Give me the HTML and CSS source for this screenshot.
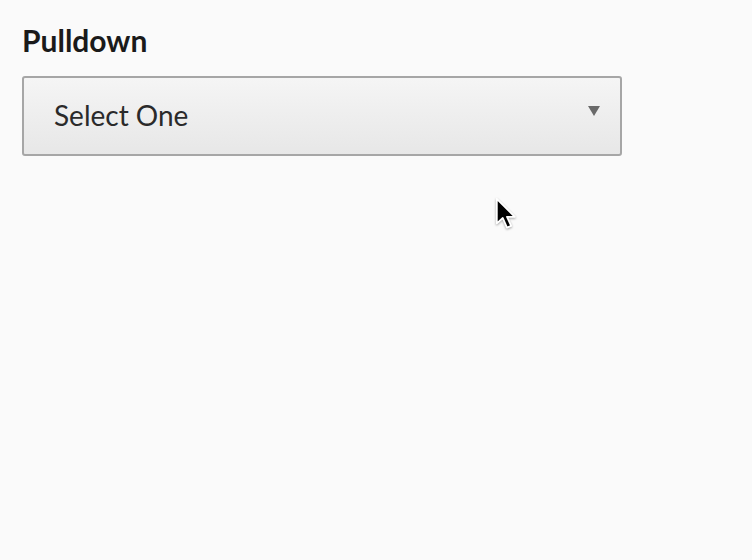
FILE: index.html
```html
<!DOCTYPE html>
<html>
<head>
<meta charset="utf-8">
<link rel="stylesheet" href="styles.css">
</head>
<body>
<div class="page">
  <label class="title">Pulldown</label>
  <div class="select">
    <span class="value">Select One</span>
    <span class="arrow"></span>
  </div>
</div>
<svg class="cursor" width="24" height="36" viewBox="0 0 20 30">
  <path d="M1.5 1.5 L1.5 22 L6.5 17.5 L10 25.5 L13.5 24 L10 16.5 L16.5 16.5 Z" fill="#000" stroke="#fff" stroke-width="1.5" stroke-linejoin="round"/>
</svg>
</body>
</html>
```
FILE: styles.css
```css
html, body {
  margin: 0;
  padding: 0;
  background: #fafafa;
}
body {
  width: 752px;
  height: 560px;
  position: relative;
  overflow: hidden;
  font-family: Lato, "Open Sans", sans-serif;
}
.page {
  padding: 20px 22px;
  display: flex;
  flex-direction: column;
  gap: 16px;
}
.title {
  font-size: 30px;
  font-weight: 700;
  color: #1a1a1a;
  line-height: 40px;
}
.select {
  box-sizing: border-box;
  width: 600px;
  height: 80px;
  border: 2px solid #a6a6a6;
  border-radius: 3px;
  background: linear-gradient(#f5f5f5, #e7e7e7);
  display: flex;
  align-items: center;
  justify-content: space-between;
  padding: 0 20px 2px 30px;
}
.value {
  font-size: 28px;
  color: #2a2a2a;
}
.arrow {
  width: 0;
  height: 0;
  border-left: 6px solid transparent;
  border-right: 6px solid transparent;
  border-top: 10px solid #6a6a6a;
  margin-top: -8px;
}
.cursor {
  position: absolute;
  left: 495px;
  top: 197px;
  filter: drop-shadow(0 1px 1px rgba(0,0,0,0.35));
}
```
